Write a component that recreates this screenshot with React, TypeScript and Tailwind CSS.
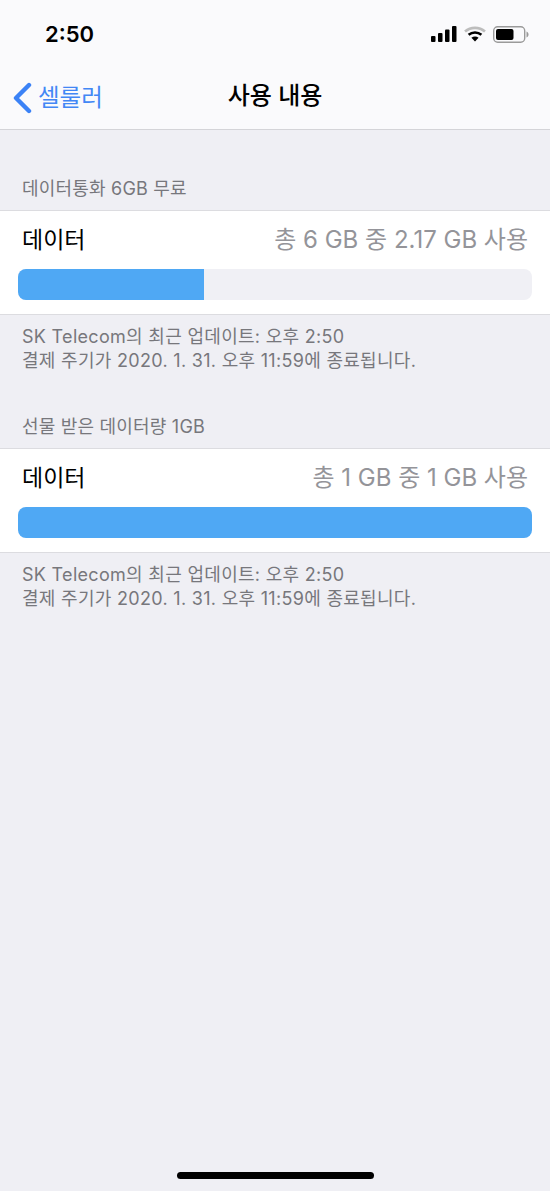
const fontStack = { fontFamily: '"Inter", "Noto Sans CJK KR", sans-serif' };

const footerLines = ["SK Telecom의 최근 업데이트: 오후 2:50", "결제 주기가 2020. 1. 31. 오후 11:59에 종료됩니다."];

function StatusIcons() {
  return (
    <div className="flex items-center gap-[7px]">
      <svg width="26" height="16" viewBox="0 0 26 16" fill="#000">
        <rect x="0" y="10" width="4.5" height="6" rx="1" />
        <rect x="7" y="7" width="4.5" height="9" rx="1" />
        <rect x="14" y="3.5" width="4.5" height="12.5" rx="1" />
        <rect x="21" y="0" width="4.5" height="16" rx="1" />
      </svg>
      <svg width="22" height="16" viewBox="0 0 22 16">
        <path d="M1 5.5C6.7.6 15.3.6 21 5.5" fill="none" stroke="#bdbdbd" strokeWidth="2.6" />
        <path d="M4.6 8.8c3.7-3 9.1-3 12.8 0" fill="none" stroke="#000" strokeWidth="2.6" />
        <path d="M11 15.5l-3.6-3.8c2.1-1.5 5.1-1.5 7.2 0z" fill="#000" />
      </svg>
      <svg width="36" height="17" viewBox="0 0 36 17">
        <rect x="0.7" y="0.7" width="31" height="15.6" rx="4" fill="none" stroke="#9a9a9a" strokeWidth="1.4" />
        <rect x="3" y="3" width="17.5" height="11" rx="2" fill="#000" />
        <path d="M33.5 5.5c1.4.5 2 1.6 2 3s-.6 2.5-2 3z" fill="#9a9a9a" />
      </svg>
    </div>
  );
}

function UsageSection({ title, usage, percent }: { title: string; usage: string; percent: number }) {
  return (
    <section>
      <h2 className="h-[34px] px-[22px] pt-[1px] text-[18px] leading-[24px] tracking-[0.2px] text-[#77777c]">{title}</h2>
      <div className="h-[105px] border-y border-[#dcdce0] bg-white">
        <div className="flex h-[58px] items-center justify-between px-[22px]">
          <span className="text-[23px] text-black">데이터</span>
          <span className="text-[24px] text-[#949499]">{usage}</span>
        </div>
        <div className="mx-[18px] h-[31px] overflow-hidden rounded-[8px] bg-[#f0f0f5]">
          <div className="h-full bg-[#4fa8f4]" style={{ width: `${percent}%` }} />
        </div>
      </div>
      <div className="px-[22px] pt-[10px] text-[18px] leading-[24px] tracking-[0.3px] text-[#77777c]">
        {footerLines.map((line) => (
          <p key={line}>{line}</p>
        ))}
      </div>
    </section>
  );
}

export default function App() {
  return (
    <div className="relative flex h-[1191px] w-[550px] flex-col overflow-hidden bg-[#efeff4]" style={fontStack}>
      <header className="h-[130px] border-b border-[#d4d4d8] bg-[#fafafc]">
        <div className="flex h-[68px] items-center justify-between pl-[45px] pr-[21px]">
          <span className="text-[22px] font-semibold text-black">2:50</span>
          <StatusIcons />
        </div>
        <div className="relative flex h-[56px] items-center justify-center">
          <div className="absolute left-[13px] top-[12px] flex items-center gap-[6px]">
            <svg width="19" height="32" viewBox="0 0 19 32" fill="none">
              <path d="M16 3L3 16l13 13" stroke="#3b82f6" strokeWidth="4.4" strokeLinecap="round" strokeLinejoin="round" />
            </svg>
            <span className="text-[23.5px] text-[#4287f5]">셀룰러</span>
          </div>
          <h1 className="text-[24px] font-medium text-black">사용 내용</h1>
        </div>
      </header>
      <main className="flex flex-col gap-[41px] pt-[46px]">
        <UsageSection title="데이터통화 6GB 무료" usage="총 6 GB 중 2.17 GB 사용" percent={36.2} />
        <UsageSection title="선물 받은 데이터량 1GB" usage="총 1 GB 중 1 GB 사용" percent={100} />
      </main>
      <div className="absolute bottom-[12px] left-[177px] h-[7px] w-[197px] rounded-full bg-black" />
    </div>
  );
}
